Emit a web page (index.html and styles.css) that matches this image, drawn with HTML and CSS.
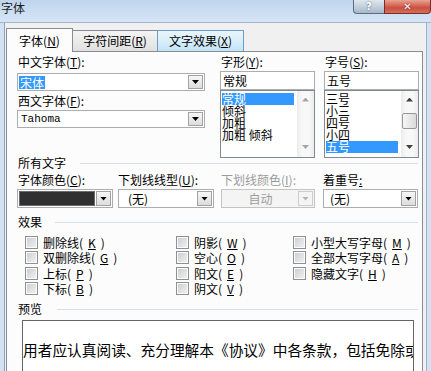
FILE: index.html
```html
<!DOCTYPE html>
<html lang="zh-CN">
<head>
    <meta charset="UTF-8">
    <meta name="viewport" content="width=device-width, initial-scale=1.0">
    <title>字体</title>
    <link rel="stylesheet" href="styles.css">
</head>
<body>
    <div class="window">
        <div class="titlebar">
            <span class="title">字体</span>
            <div class="caption-buttons">
                <span class="caption-btn help">?</span>
                <span class="caption-btn close">✕</span>
            </div>
        </div>

        <div class="client">
            <div class="tabs">
                <div class="tab active">字体(<u>N</u>)</div>
                <div class="tab tab-spacing">字符间距(<u>R</u>)</div>
                <div class="tab tab-effects hover">文字效果(<u>X</u>)</div>
            </div>

            <div class="panel">
                <!-- font / style / size pickers -->
                <div class="font-pickers">
                    <div class="col col-font">
                        <label class="lbl">中文字体(<u>T</u>):</label>
                        <div class="combo combo-cn">
                            <span class="value"><span class="selected-text">宋体</span></span>
                            <span class="drop"></span>
                        </div>
                        <label class="lbl lbl-west">西文字体(<u>F</u>):</label>
                        <div class="combo combo-west">
                            <span class="value mono">Tahoma</span>
                            <span class="drop"></span>
                        </div>
                    </div>

                    <div class="col col-style">
                        <label class="lbl">字形(<u>Y</u>):</label>
                        <div class="textbox">常规</div>
                        <div class="listbox">
                            <ul class="items">
                                <li class="selected">常规</li>
                                <li>倾斜</li>
                                <li>加粗</li>
                                <li>加粗 倾斜</li>
                            </ul>
                            <div class="scrollbar">
                                <span class="sb-arrow up"></span>
                                <span class="track"></span>
                                <span class="sb-arrow down"></span>
                            </div>
                        </div>
                    </div>

                    <div class="col col-size">
                        <label class="lbl">字号(<u>S</u>):</label>
                        <div class="textbox">五号</div>
                        <div class="listbox">
                            <ul class="items">
                                <li>三号</li>
                                <li>小三</li>
                                <li>四号</li>
                                <li>小四</li>
                                <li class="selected">五号</li>
                            </ul>
                            <div class="scrollbar enabled">
                                <span class="sb-arrow up"></span>
                                <span class="track"><span class="thumb"></span></span>
                                <span class="sb-arrow down"></span>
                            </div>
                        </div>
                    </div>
                </div>

                <!-- all text -->
                <div class="group-head head-all">所有文字</div>
                <div class="attrs">
                    <div class="field">
                        <label class="lbl-sm first">字体颜色(<u>C</u>):</label>
                        <div class="combo combo-sm color">
                            <span class="swatch"></span>
                            <span class="drop"></span>
                        </div>
                    </div>
                    <div class="field">
                        <label class="lbl-sm">下划线线型(<u>U</u>):</label>
                        <div class="combo combo-sm">
                            <span class="value pad-u">(无)</span>
                            <span class="drop"></span>
                        </div>
                    </div>
                    <div class="field">
                        <label class="lbl-sm muted">下划线颜色(<u>I</u>):</label>
                        <div class="combo combo-sm disabled">
                            <span class="value">自动</span>
                            <span class="drop"></span>
                        </div>
                    </div>
                    <div class="field">
                        <label class="lbl-sm">着重号<u>:</u></label>
                        <div class="combo combo-sm emph">
                            <span class="value pad-e">(无)</span>
                            <span class="drop"></span>
                        </div>
                    </div>
                </div>

                <!-- effects -->
                <div class="group-head head-effects">效果</div>
                <div class="checks">
                    <div class="check"><span class="box"></span>删除线(<u>K</u>)</div>
                    <div class="check"><span class="box"></span>双删除线(<u>G</u>)</div>
                    <div class="check"><span class="box"></span>上标(<u>P</u>)</div>
                    <div class="check"><span class="box"></span>下标(<u>B</u>)</div>
                    <div class="check"><span class="box"></span>阴影(<u>W</u>)</div>
                    <div class="check"><span class="box"></span>空心(<u>O</u>)</div>
                    <div class="check"><span class="box"></span>阳文(<u>E</u>)</div>
                    <div class="check"><span class="box"></span>阴文(<u>V</u>)</div>
                    <div class="check"><span class="box"></span>小型大写字母(<u>M</u>)</div>
                    <div class="check"><span class="box"></span>全部大写字母(<u>A</u>)</div>
                    <div class="check"><span class="box"></span>隐藏文字(<u>H</u>)</div>
                </div>

                <!-- preview -->
                <div class="group-head head-preview">预览</div>
                <div class="preview">用者应认真阅读、充分理解本《协议》中各条款，包括免除或限制责任的条款</div>
            </div>
        </div>
    </div>
</body>
</html>
```

FILE: styles.css
```css
* {
    box-sizing: border-box;
}

body {
    margin: 0;
    font-family: "Noto Sans CJK SC", sans-serif;
    font-size: 12px;
    color: #000;
    background: #d3e2f2;
    overflow: hidden;
}

u {
    text-decoration: underline;
    text-underline-offset: 1px;
}

.window {
    width: 431px;
    height: 371px;
    display: flex;
    flex-direction: column;
    background: #d3e2f2;
    overflow: hidden;
}

/* title bar */
.titlebar {
    height: 23px;
    flex: none;
    display: flex;
    align-items: flex-start;
    background: linear-gradient(#bfd5ed, #d6e5f6);
    border-bottom: 1px solid #a3b6cb;
}

.title {
    line-height: 15px;
    padding-left: 1px;
    color: #1b1b1b;
}

.caption-buttons {
    display: flex;
    margin-left: auto;
}

.caption-btn {
    height: 14px;
    display: flex;
    align-items: center;
    justify-content: center;
    border: 1px solid #5d6c80;
    border-top: none;
    font-family: "DejaVu Sans", sans-serif;
    font-weight: bold;
    font-size: 10px;
    color: #fff;
}

.help {
    width: 31px;
    border-right: none;
    border-radius: 0 0 0 4px;
    background: linear-gradient(#dfe7ef, #a8b9ca);
    text-shadow: 0 0 2px #4a5a6c;
}

.close {
    width: 47px;
    border-color: #772f26;
    border-radius: 0 0 4px 0;
    background: linear-gradient(#e9a393, #cc4f3e 60%, #d46e5b);
    text-shadow: 0 0 2px #6b1f16;
}

/* client area */
.client {
    flex: 1;
    display: flex;
    flex-direction: column;
    margin: 0 4px;
    padding: 5px 3px 0 1px;
    border-left: 1px solid #8ea2ba;
    border-right: 1px solid #9fb1c6;
    background: #f0f0f0;
}

.tabs {
    display: flex;
    align-items: flex-end;
    height: 23px;
    flex: none;
}

.tab {
    height: 21px;
    margin-left: -1px;
    border: 1px solid #898c95;
    border-bottom: none;
    background: linear-gradient(#f4f4f4, #e0e0e0);
    line-height: 19px;
    text-align: center;
    white-space: nowrap;
}

.tab.active {
    position: relative;
    z-index: 1;
    width: 67px;
    height: 24px;
    margin-left: 0;
    margin-bottom: -1px;
    padding-top: 2px;
    background: #fcfcfc;
}

.tab-spacing {
    width: 86px;
}

.tab-effects {
    width: 87px;
}

.tab.hover {
    border-color: #6f9cc4;
    background: linear-gradient(#eaf5fc, #d8eefb 50%, #c3e3f8);
}

.panel {
    flex: 1;
    border: 1px solid #898c95;
    background: #fcfcfc;
    padding: 1px 0 0 10px;
    overflow: hidden;
}

/* pickers */
.font-pickers {
    display: flex;
}

.col {
    display: flex;
    flex-direction: column;
}

.col-font {
    width: 188px;
    margin-right: 15px;
}

.col-style {
    width: 95px;
    margin-right: 9px;
}

.col-size {
    width: 95px;
}

.lbl {
    display: block;
    line-height: 17px;
    padding-left: 1px;
    white-space: nowrap;
}

.lbl-west {
    margin-top: 1px;
}

.combo {
    display: flex;
    height: 18px;
    padding: 1px;
    border: 1px solid #abadb3;
    background: #fff;
}

.combo-cn {
    margin-top: 3px;
}

.combo-west {
    margin-top: 1px;
}

.combo .value {
    flex: 1;
    display: flex;
    align-items: center;
    white-space: nowrap;
    overflow: hidden;
}

.selected-text {
    background: #3399ff;
    color: #fff;
    line-height: 13px;
    padding: 0 1px;
}

.mono {
    font-family: "Liberation Mono", monospace;
    font-size: 11px;
    padding-left: 2px;
}

.drop {
    width: 15px;
    flex: none;
    display: flex;
    align-items: center;
    justify-content: center;
    border: 1px solid #a2a2a2;
    background: linear-gradient(#f7f7f7, #dcdcdc);
}

.drop::before {
    content: "";
    width: 7px;
    height: 4px;
    background: #000;
    clip-path: polygon(0 0, 100% 0, 50% 100%);
}

.textbox {
    height: 19px;
    margin-top: 1px;
    padding-left: 2px;
    border: 1px solid #abadb3;
    background: #fff;
    line-height: 17px;
}

.listbox {
    display: flex;
    height: 68px;
    border: 1px solid #828790;
    background: #fff;
}

.items {
    flex: 1;
    list-style: none;
    margin: 0;
    padding: 2px 3px 0 1px;
}

.items li {
    height: 12px;
    line-height: 12px;
    white-space: nowrap;
}

.items li.selected {
    background: #3399ff;
    color: #fff;
}

.scrollbar {
    width: 17px;
    flex: none;
    display: flex;
    flex-direction: column;
    background: linear-gradient(90deg, #ececec, #f8f8f8 30%, #f8f8f8 70%, #ececec);
}

.sb-arrow {
    height: 17px;
    display: flex;
    align-items: center;
    justify-content: center;
}

.sb-arrow.down {
    align-items: flex-start;
    padding-top: 5px;
}

.sb-arrow::before {
    content: "";
    width: 7px;
    height: 4px;
    background: #a5a5a5;
    clip-path: polygon(50% 0, 100% 100%, 0 100%);
}

.sb-arrow.down::before {
    clip-path: polygon(0 0, 100% 0, 50% 100%);
}

.scrollbar.enabled .sb-arrow::before {
    background: #404040;
}

.track {
    flex: 1;
    display: flex;
    flex-direction: column;
}

.thumb {
    height: 16px;
    margin: 5px 1px 0;
    border: 1px solid #979797;
    border-radius: 2px;
    background: linear-gradient(90deg, #f6f6f6, #dadada);
}

/* group headers */
.group-head {
    display: flex;
    align-items: center;
    line-height: 14px;
    padding-left: 1px;
    margin-right: 4px;
    white-space: nowrap;
}

.group-head::after {
    content: "";
    flex: 1;
    margin-left: 14px;
    border-top: 1px solid #d5dfe5;
}

.head-all {
    margin-top: -2px;
}

.head-effects {
    margin-top: 7px;
}

.head-effects::after {
    margin-left: 13px;
}

.head-preview {
    margin-top: 6px;
}

.head-preview::after {
    margin-left: 15px;
}

/* all text attributes */
.attrs {
    display: grid;
    grid-template-columns: 101px 103px 102px 95px;
    margin-top: 2px;
}

.field {
    display: flex;
    flex-direction: column;
}

.lbl-sm {
    line-height: 16px;
    white-space: nowrap;
}

.lbl-sm.first {
    padding-left: 1px;
}

.muted {
    color: #9b9b9b;
}

.combo-sm {
    height: 19px;
    margin-top: 1px;
    width: 96px;
}

.field:nth-child(3) .combo-sm {
    width: 94px;
}

.field:nth-child(4) .combo-sm {
    width: 95px;
}

.swatch {
    flex: 1;
    margin-right: 1px;
    background: #303030;
    border: 1px solid #6a6a6a;
}

.pad-u {
    padding-left: 8px;
}

.pad-e {
    padding-left: 5px;
}

.combo.disabled {
    border-color: #c4c4c4;
    background: #f4f4f4;
}

.combo.disabled .value {
    justify-content: center;
    color: #9d9d9d;
}

.combo.disabled .drop {
    border-color: #cdcdcd;
    background: #f4f4f4;
}

.combo.disabled .drop::before {
    background: #b3b3b3;
}

/* effects */
.checks {
    display: grid;
    grid-template-columns: 151px 117px 1fr;
    grid-template-rows: repeat(4, 15.25px);
    grid-auto-flow: column;
    margin-top: 6px;
    padding-left: 8px;
}

.check {
    display: flex;
    align-items: center;
    gap: 5px;
    white-space: nowrap;
}

.box {
    width: 13px;
    height: 13px;
    flex: none;
    border: 1px solid #8f8f8f;
    background: linear-gradient(135deg, #c8ccd1, #f3f3f3);
    box-shadow: inset 0 0 0 1px #fbfbfb;
}

/* preview */
.preview {
    width: 392px;
    height: 60px;
    margin: 4px 0 0 5px;
    padding-top: 19px;
    border: 1px solid #646464;
    background: #fff;
    font-size: 14.7px;
    line-height: 20px;
    white-space: nowrap;
    overflow: hidden;
}
```
